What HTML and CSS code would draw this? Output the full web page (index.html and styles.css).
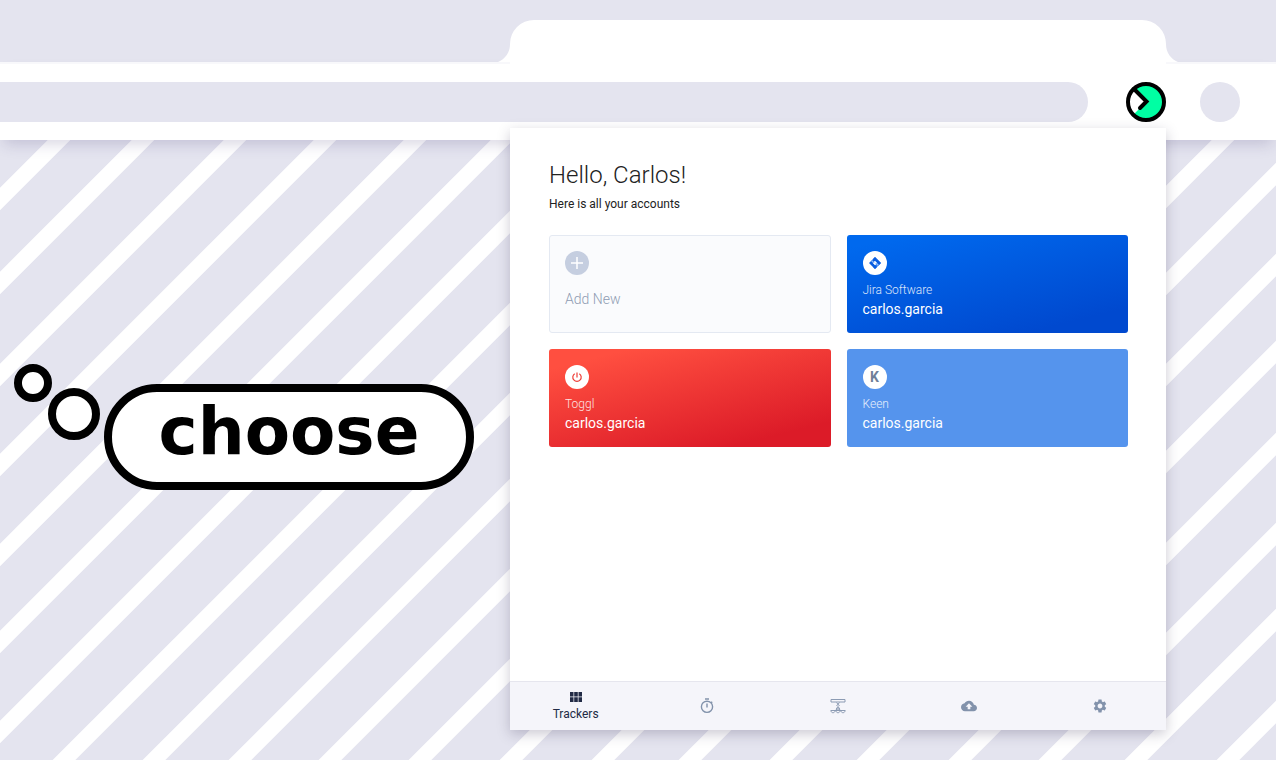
FILE: index.html
```html
<!DOCTYPE html>
<html lang="en">
<head>
    <meta charset="UTF-8">
    <meta name="viewport" content="width=device-width, initial-scale=1">
    <title>Trackers</title>
    <link rel="stylesheet" href="styles.css">
</head>
<body>
    <svg class="stripes" aria-hidden="true">
        <path d="M-1801 2000L2199 -2000M-1717 2000L2283 -2000M-1625 2000L2375 -2000M-1535 2000L2465 -2000M-1445 2000L2555 -2000M-1358 2000L2642 -2000M-1268 2000L2732 -2000M-1176 2000L2824 -2000M-1086 2000L2914 -2000M-1000 2000L3000 -2000M-910 2000L3090 -2000M-820 2000L3180 -2000M-729 2000L3271 -2000M-637 2000L3363 -2000M-550 2000L3450 -2000M-459 2000L3541 -2000M-372 2000L3628 -2000M-280 2000L3720 -2000M-190 2000L3810 -2000M-104 2000L3896 -2000M-12 2000L3988 -2000M78 2000L4078 -2000M168 2000L4168 -2000"/>
    </svg>
    <header class="browser">
        <div class="tabs">
            <div class="tab">
                <svg class="flare left" width="12" height="22" viewBox="0 0 12 22"><path d="M12 0V22H0C7 19 12 13 12 4Z"/></svg>
                <svg class="flare right" width="12" height="22" viewBox="0 0 12 22"><path d="M0 0V22H12C5 19 0 13 0 4Z"/></svg>
            </div>
        </div>
        <div class="toolbar">
            <input class="address" type="text" aria-label="Address">
            <button class="extension" type="button" aria-label="Extension">
                <svg width="40" height="40" viewBox="0 0 40 40">
                    <circle cx="20" cy="20" r="18" fill="#fff"/>
                    <path d="M8 7A18 18 0 1 1 7 33L20 20Z" fill="#00ffa3"/>
                    <circle cx="20" cy="20" r="18" fill="none" stroke="#000" stroke-width="4"/>
                    <path d="M8 7L20.500 19.500L14 26" fill="none" stroke="#000" stroke-width="4" stroke-linecap="round"/>
                </svg>
            </button>
            <button class="avatar" type="button" aria-label="Profile"></button>
        </div>
    </header>
    <main class="stage">
        <div class="thought">
            <span class="dot small"></span>
            <span class="dot big"></span>
            <p class="bubble">choose</p>
        </div>
        <section class="popup">
            <div class="content">
                <h1>Hello, Carlos!</h1>
                <p class="intro">Here is all your accounts</p>
                <div class="cards">
                    <button class="card add" type="button">
                        <svg class="icon" width="24" height="24" viewBox="0 0 24 24">
                            <circle cx="12" cy="12" r="12" fill="#c5cee0"/>
                            <path d="M12 6V18M6 12H18" stroke="#fff" stroke-width="1.500"/>
                        </svg>
                        <span class="label">Add New</span>
                    </button>
                    <button class="card jira" type="button">
                        <svg class="icon" width="24" height="24" viewBox="0 0 24 24">
                            <circle cx="12" cy="12" r="12" fill="#fff"/>
                            <path d="M12 6L18 12L12 18L10 16L12 14L14 12L12 10L10 8Z" fill="#2f7ff0"/>
                            <path d="M12 6L14 8L12 10L10 12L12 14L14 16L12 18L6 12Z" fill="#0a5de0"/>
                            <path d="M14 8L18 12L15 15L13 13L14 12L12 10Z" fill="#0a5de0"/>
                            <path d="M12 10L14 12L12 14L10 12Z" fill="#fff"/>
                            <path d="M9 9L12 12L10 12L8 10ZM15 15L12 12L14 12L16 14Z" fill="#8dbafa"/>
                        </svg>
                        <span class="service">Jira Software</span>
                        <span class="user">carlos.garcia</span>
                    </button>
                    <button class="card toggl" type="button">
                        <svg class="icon" width="24" height="24" viewBox="0 0 24 24">
                            <circle cx="12" cy="12" r="12" fill="#fff"/>
                            <path d="M12 7.500V12.500M9.700 8.700A4.200 4.200 0 1 0 14.300 8.700" fill="none" stroke="#ee3f39" stroke-width="1.200"/>
                        </svg>
                        <span class="service">Toggl</span>
                        <span class="user">carlos.garcia</span>
                    </button>
                    <button class="card keen" type="button">
                        <span class="icon letter">K</span>
                        <span class="service">Keen</span>
                        <span class="user">carlos.garcia</span>
                    </button>
                </div>
            </div>
            <nav class="menu">
                <a class="current" href="#">
                    <svg width="12" height="10" viewBox="0 0 12 10"><path d="M0 0H3.500V4.600H0ZM4.200 0H7.800V4.600H4.200ZM8.500 0H12V4.600H8.500ZM0 5.300H3.500V10H0ZM4.200 5.300H7.800V10H4.200ZM8.500 5.300H12V10H8.500Z"/></svg>
                    <span>Trackers</span>
                </a>
                <a href="#" aria-label="Timer">
                    <svg width="16" height="16" viewBox="0 0 16 16"><g fill="none" stroke="#8292ab" stroke-width="1.400"><circle cx="8" cy="8.800" r="5.600"/><path d="M6 1H10M8 5.500V9.500M12.200 3.800L13.200 4.800"/></g></svg>
                </a>
                <a href="#" aria-label="Workflow">
                    <svg width="16" height="16" viewBox="0 0 16 16"><g fill="none" stroke="#8c9bb3" stroke-width="1"><path d="M1 1.500H15V4H1ZM6.500 4.500L9.500 8M9.500 4.500L6.500 8M8 8V10M7 9.500L6 12.500M9 9.500L10 12.500M0.500 12.500H15.500M1 13C1.300 15.300 4.700 15.300 5 13M6 13C6.300 15.300 9.700 15.300 10 13M11 13C11.300 15.300 14.700 15.300 15 13"/><circle cx="8" cy="11" r="1.300"/></g></svg>
                </a>
                <a href="#" aria-label="Upload">
                    <svg width="16" height="16" viewBox="0 0 24 24"><path d="M19.350 10.040C18.670 6.590 15.640 4 12 4 9.110 4 6.600 5.640 5.350 8.040 2.340 8.360 0 10.910 0 14c0 3.310 2.690 6 6 6h13c2.760 0 5-2.240 5-5 0-2.640-2.050-4.780-4.650-4.960zM14 13v4h-4v-4H7l5-5 5 5h-3z"/></svg>
                </a>
                <a href="#" aria-label="Settings">
                    <svg width="16" height="16" viewBox="0 0 24 24"><path d="M19.140 12.940c.040-.300.060-.610.060-.940 0-.320-.020-.640-.070-.940l2.030-1.580c.180-.140.230-.410.120-.610l-1.920-3.320c-.120-.220-.370-.290-.590-.220l-2.390.960c-.500-.380-1.030-.700-1.620-.940l-.360-2.540c-.040-.240-.240-.410-.480-.410h-3.840c-.240 0-.430.170-.470.410l-.360 2.540c-.590.240-1.130.570-1.620.940l-2.390-.960c-.220-.080-.470 0-.590.220L2.740 8.870c-.120.210-.080.470.120.610l2.030 1.580c-.050.300-.090.630-.090.940s.020.640.070.940l-2.030 1.580c-.180.140-.230.410-.120.610l1.920 3.320c.120.220.370.290.590.220l2.390-.960c.500.380 1.030.700 1.620.940l.360 2.540c.050.240.240.410.480.410h3.840c.240 0 .440-.170.470-.410l.360-2.540c.590-.240 1.130-.560 1.620-.940l2.390.960c.220.080.470 0 .590-.220l1.920-3.320c.120-.220.070-.470-.120-.610l-2.010-1.580zM12 15.600c-1.980 0-3.600-1.620-3.600-3.600s1.620-3.600 3.600-3.600 3.600 1.620 3.600 3.600-1.620 3.600-3.600 3.600z"/></svg>
                </a>
            </nav>
        </section>
    </main>
</body>
</html>
```
FILE: styles.css
```css
*{
    margin:0;
    padding:0;
    box-sizing: border-box;
}
body{
    min-height: 100vh;
    background-color: #e4e4ef;
    font-family: Roboto, "Liberation Sans", sans-serif;
    color:#222b45;
}
button{
    border:0;
    font-family: inherit;
    cursor:pointer;
}
/* background */
.stripes{
    position: absolute;
    top:0;
    left:0;
    width:100%;
    height:100%;
    z-index: -1;
}
.stripes path{
    fill:none;
    stroke:#fff;
    stroke-width:16px;
}
/* browser */
.tabs{
    display: flex;
    justify-content: flex-end;
    height:62px;
    padding:20px 110px 0 0;
    background-color: #e4e4ef;
}
.tab{
    position: relative;
    width:656px;
    margin-bottom:-2px;
    background-color: #fff;
    border-radius: 24px 24px 0 0;
}
.flare{
    position: absolute;
    bottom:2px;
    fill:#fff;
}
.flare.left{
    left:-12px;
}
.flare.right{
    right:-12px;
}
.toolbar{
    display: flex;
    align-items: center;
    height:78px;
    padding-right:36px;
    border-top:2px solid #f8f8fb;
    background-color: #fff;
    box-shadow: 0 8px 14px -4px rgba(60,50,110,.2);
}
.address{
    flex:1;
    height:40px;
    padding:0 20px;
    border:0;
    border-radius: 0 20px 20px 0;
    background-color: #e4e4ef;
    font-size:16px;
}
.extension{
    width:40px;
    height:40px;
    margin:0 34px 0 38px;
    background: none;
}
.extension svg{
    display: block;
}
.avatar{
    width:40px;
    height:40px;
    border-radius: 50%;
    background-color: #e4e4ef;
}
.stage{
    display: flex;
    justify-content: space-between;
    align-items: flex-start;
    padding:0 110px 30px 14px;
}
/* thought bubble */
.thought{
    display: flex;
    align-items: flex-start;
    margin-top:224px;
}
.dot{
    border:8px solid #000;
    border-radius: 50%;
    background-color: #fff;
}
.dot.small{
    width:38px;
    height:38px;
}
.dot.big{
    width:52px;
    height:52px;
    margin:24px 4px 0 -4px;
}
.bubble{
    width:370px;
    height:106px;
    margin-top:20px;
    border:8px solid #000;
    border-radius: 53px;
    background-color: #fff;
    color:#000;
    font:bold 66px/80px "DejaVu Sans", sans-serif;
    text-align:center;
}
/* popup */
.popup{
    position: relative;
    display: flex;
    flex-direction: column;
    width:656px;
    min-height:602px;
    margin-top:-12px;
    background-color: #fff;
    box-shadow: 0 4px 12px rgba(50,45,80,.25);
}
.content{
    flex:1;
    padding:31px 38px 0 39px;
}
h1{
    font-size:24px;
    font-weight: 300;
    line-height:32px;
    color:#222;
}
.intro{
    margin-top:5px;
    font-size:12px;
    line-height:16px;
    color:#222;
}
.cards{
    display: grid;
    grid-template-columns: 1fr 1fr;
    gap:16px;
    margin-top:23px;
}
.card{
    display: flex;
    flex-direction: column;
    align-items: flex-start;
    height:98px;
    padding:16px;
    border-radius: 3px;
    color:#fff;
    text-align:left;
}
.icon{
    flex:none;
    width:24px;
    height:24px;
}
.letter{
    border-radius: 50%;
    background-color: #fff;
    color:#6f7f98;
    font-size:14px;
    font-weight: bold;
    line-height:24px;
    text-align:center;
}
.service{
    margin-top:6px;
    font-size:12px;
    font-weight: 300;
    line-height:18px;
    opacity:.85;
}
.user{
    font-size:14px;
    line-height:20px;
}
.add{
    padding:15px;
    border:1px solid #e4e9f2;
    background-color: #fafbfd;
}
.label{
    margin-top:14px;
    font-size:14px;
    font-weight: 300;
    line-height:20px;
    color:#8f9bb3;
}
.jira{
    background-image: linear-gradient(166deg, #0069ee 8%, #0049cf 85%);
}
.toggl{
    background-image: linear-gradient(166deg, #ff4f40 12%, #dc1b28 85%);
}
.keen{
    background-color: #5594ed;
}
.menu{
    display: flex;
    height:49px;
    border-top:1px solid #e6e6ee;
    background-color: #f5f5fa;
}
.menu a{
    display: flex;
    flex:1;
    flex-direction: column;
    align-items: center;
    justify-content: center;
    font-size:12px;
    line-height:16px;
    color:#222b45;
    text-decoration: none;
}
.menu svg{
    fill:#8292ab;
}
.menu .current{
    gap:4px;
    padding-top:2px;
}
.menu .current svg{
    fill:#222b45;
}
```
